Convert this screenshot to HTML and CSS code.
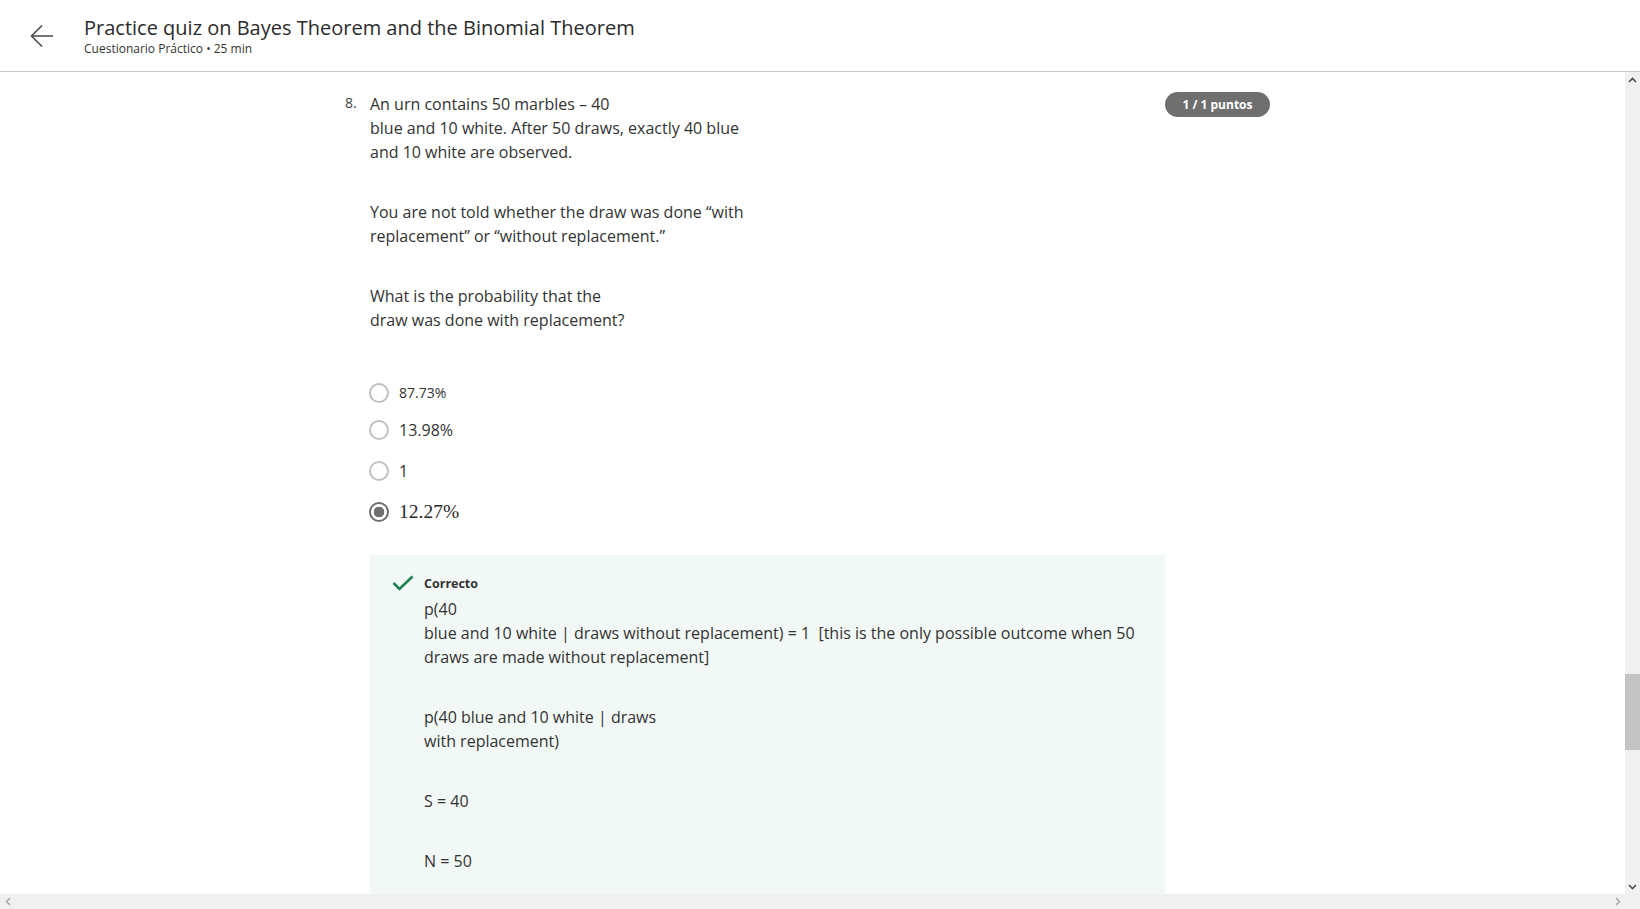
FILE: index.html
```html
<!DOCTYPE html>
<html lang="es">
<head>
<meta charset="utf-8">
<title>Practice quiz on Bayes Theorem and the Binomial Theorem</title>
<link rel="stylesheet" href="styles.css">
</head>
<body>
<div class="app">
  <header class="topbar">
    <button class="back" aria-label="Volver">
      <svg width="24" height="24" viewBox="0 0 24 24"><path d="M23 12H1.5M12 1.5L1.5 12L12 22.5" fill="none" stroke="#4a4a4a" stroke-width="1.6"/></svg>
    </button>
    <div class="titles">
      <h1 class="title">Practice quiz on Bayes Theorem and the Binomial Theorem</h1>
      <div class="subtitle">Cuestionario Práctico • 25 min</div>
    </div>
  </header>
  <div class="main">
    <div class="viewport">
      <div class="question">
        <div class="qnum">8.</div>
        <div class="qbody">
          <p class="para">An urn contains 50 marbles – 40<br>blue and 10 white. After 50 draws, exactly 40 blue<br>and 10 white are observed.</p>
          <p class="para">You are not told whether the draw was done “with<br>replacement” or “without replacement.”</p>
          <p class="para">What is the probability that the<br>draw was done with replacement?</p>
          <div class="options">
            <label class="opt opt-first"><span class="radio"></span><span class="opt-text small">87.73%</span></label>
            <label class="opt"><span class="radio"></span><span class="opt-text">13.98%</span></label>
            <label class="opt"><span class="radio"></span><span class="opt-text">1</span></label>
            <label class="opt"><span class="radio checked"></span><span class="opt-text math">12.27%</span></label>
          </div>
          <div class="feedback">
            <div class="fb-head">
              <svg class="check" width="22" height="16" viewBox="0 0 22 16"><path d="M1.5 8L7.5 14L20.5 1.5" fill="none" stroke="#1f8354" stroke-width="2.6"/></svg>
              <span class="fb-label">Correcto</span>
            </div>
            <div class="fb-body">
              <p class="para">p(40<br>blue and 10 white | draws without replacement) = 1 &nbsp;[this is the only possible outcome when 50<br>draws are made without replacement]</p>
              <p class="para">p(40 blue and 10 white | draws<br>with replacement)</p>
              <p class="para">S = 40</p>
              <p class="para">N = 50</p>
            </div>
          </div>
        </div>
        <div class="badge">1 / 1 puntos</div>
      </div>
    </div>
    <div class="vscroll">
      <div class="sbtn"><svg width="9" height="6" viewBox="0 0 9 6"><path d="M1 5L4.5 1.5L8 5" fill="none" stroke="#505050" stroke-width="1.6"/></svg></div>
      <div class="vtrack"><div class="vthumb"></div></div>
      <div class="sbtn"><svg width="9" height="6" viewBox="0 0 9 6"><path d="M1 1L4.5 4.5L8 1" fill="none" stroke="#505050" stroke-width="1.6"/></svg></div>
    </div>
    <div class="hscroll">
      <div class="sbtn"><svg width="6" height="9" viewBox="0 0 6 9"><path d="M5 1L1.5 4.5L5 8" fill="none" stroke="#a3a3a3" stroke-width="1.4"/></svg></div>
      <div class="htrack"></div>
      <div class="sbtn"><svg width="6" height="9" viewBox="0 0 6 9"><path d="M1 1L4.5 4.5L1 8" fill="none" stroke="#a3a3a3" stroke-width="1.4"/></svg></div>
    </div>
    <div class="corner"></div>
  </div>
</div>
</body>
</html>
```

FILE: styles.css
```css
* { box-sizing: border-box; }
html, body {
  margin: 0;
  padding: 0;
  height: 100%;
  overflow: hidden;
  background: #fff;
  font-family: "Open Sans", "Noto Sans", sans-serif;
  color: #333;
}
.app {
  display: flex;
  flex-direction: column;
  height: 100vh;
}
.topbar {
  height: 72px;
  flex: none;
  display: flex;
  align-items: flex-start;
  border-bottom: 1px solid #c6c6c6;
  padding-left: 30px;
}
.back {
  margin-top: 24px;
  width: 24px;
  height: 24px;
  padding: 0;
  border: 0;
  background: none;
  display: flex;
}
.titles {
  margin-left: 30px;
  padding-top: 15px;
}
.title {
  margin: 0;
  font-size: 20px;
  line-height: 26px;
  font-weight: 400;
  color: #2b2b2b;
}
.subtitle {
  font-size: 12px;
  line-height: 16px;
  color: #333;
}
.main {
  flex: 1;
  min-height: 0;
  display: grid;
  grid-template-columns: 1fr 15px;
  grid-template-rows: 1fr 15px;
}
.viewport {
  overflow: hidden;
  min-height: 0;
}
.question {
  width: 935px;
  margin: 0 auto;
  padding-top: 20px;
  display: flex;
  align-items: flex-start;
}
.qnum {
  width: 25px;
  flex: none;
  font-size: 14px;
  line-height: 22px;
  color: #444;
}
.qbody {
  flex: 1;
  min-width: 0;
}
.para {
  margin: 0 0 36px;
  font-size: 16px;
  line-height: 24px;
  color: #333;
}
.options {
  margin-top: 51px;
  display: flex;
  flex-direction: column;
}
.opt {
  display: flex;
  align-items: center;
  height: 24px;
  margin-bottom: 17px;
}
.opt-first {
  height: 20px;
  margin-bottom: 15px;
}
.radio {
  width: 20px;
  height: 20px;
  flex: none;
  border-radius: 50%;
  border: 2px solid #c0c0c0;
  background: #fff;
  margin-left: -1px;
}
.radio.checked {
  border-color: #6e6e6e;
  background: radial-gradient(circle, #6e6e6e 0 5px, #fff 5.6px);
}
.opt-text {
  margin-left: 10px;
  font-size: 16px;
  line-height: 24px;
  color: #333;
}
.opt-text.small {
  font-size: 14px;
  line-height: 20px;
}
.opt-text.math {
  font-family: "Liberation Serif", "DejaVu Serif", serif;
  font-size: 19.5px;
  color: #2a2a2a;
}
.feedback {
  margin-top: 14px;
  background: #f2f8f6;
  padding: 16px 24px 40px 22px;
  min-height: 400px;
}
.fb-head {
  display: flex;
  align-items: center;
  height: 24px;
  margin-bottom: 2px;
}
.check {
  flex: none;
  margin-right: 10px;
}
.fb-label {
  font-size: 12.5px;
  font-weight: 700;
  color: #333;
}
.fb-body {
  padding-left: 32px;
}
.badge {
  flex: none;
  width: 105px;
  height: 25px;
  margin-right: 10px;
  border-radius: 13px;
  background: #6f6f6f;
  color: #fff;
  font-size: 12px;
  font-weight: 700;
  line-height: 25px;
  text-align: center;
}
.vscroll {
  background: #f0f0f0;
  display: flex;
  flex-direction: column;
  min-height: 0;
}
.sbtn {
  flex: none;
  width: 15px;
  height: 15px;
  display: flex;
  align-items: center;
  justify-content: center;
}
.vtrack {
  flex: 1;
}
.vthumb {
  margin-top: 587px;
  height: 76px;
  background: #c4c4c4;
}
.hscroll {
  background: #f0f0f0;
  display: flex;
}
.htrack {
  flex: 1;
}
.corner {
  background: #f0f0f0;
}
```
